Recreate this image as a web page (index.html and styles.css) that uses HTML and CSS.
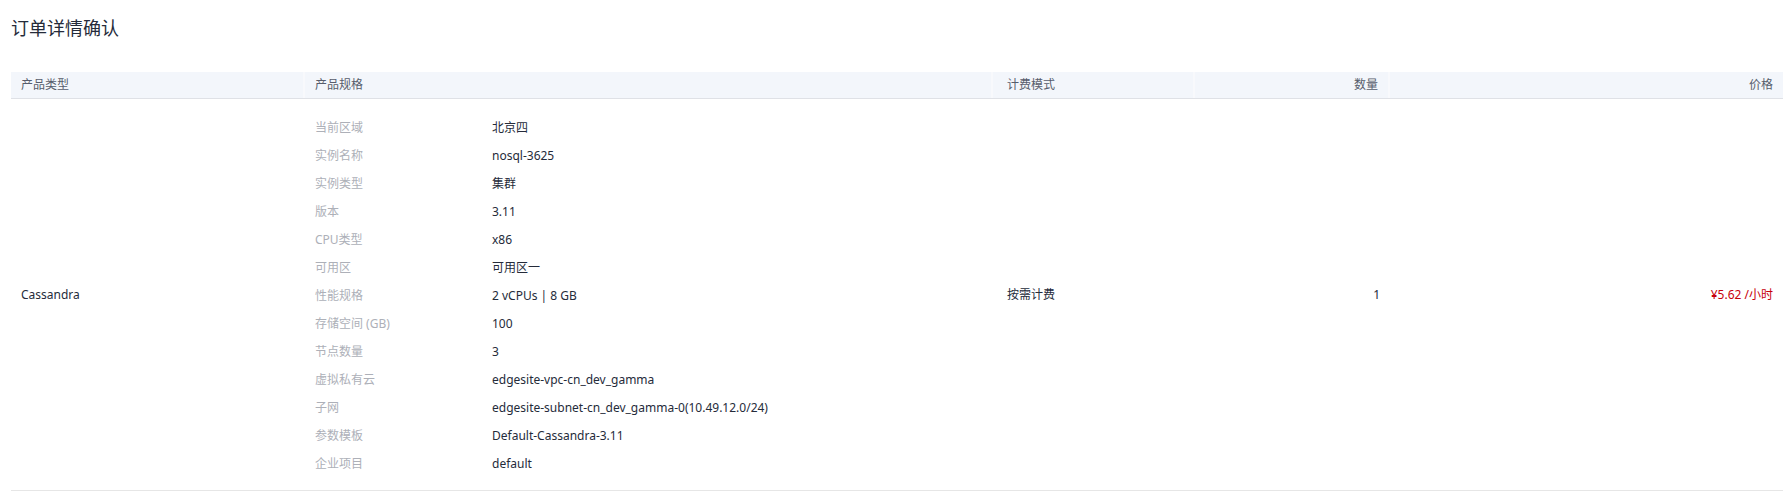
FILE: index.html
```html
<!DOCTYPE html>
<html lang="zh-CN">
<head>
<meta charset="utf-8">
<title>订单详情确认</title>
<link rel="stylesheet" href="styles.css">
</head>
<body>
<div class="page">
  <h1 class="title">订单详情确认</h1>
  <div class="table">
    <div class="thead">
      <div class="th">产品类型</div>
      <div class="th">产品规格</div>
      <div class="th">计费模式</div>
      <div class="th right">数量</div>
      <div class="th right last">价格</div>
    </div>
    <div class="tbody">
      <div class="td">Cassandra</div>
      <div class="td spec-cell">
        <dl class="spec">
          <dt>当前区域</dt><dd>北京四</dd>
          <dt>实例名称</dt><dd>nosql-3625</dd>
          <dt>实例类型</dt><dd>集群</dd>
          <dt>版本</dt><dd>3.11</dd>
          <dt>CPU类型</dt><dd>x86</dd>
          <dt>可用区</dt><dd>可用区一</dd>
          <dt>性能规格</dt><dd>2 vCPUs | 8 GB</dd>
          <dt>存储空间 (GB)</dt><dd>100</dd>
          <dt>节点数量</dt><dd>3</dd>
          <dt>虚拟私有云</dt><dd>edgesite-vpc-cn_dev_gamma</dd>
          <dt>子网</dt><dd>edgesite-subnet-cn_dev_gamma-0(10.49.12.0/24)</dd>
          <dt>参数模板</dt><dd>Default-Cassandra-3.11</dd>
          <dt>企业项目</dt><dd>default</dd>
        </dl>
      </div>
      <div class="td">按需计费</div>
      <div class="td right">1</div>
      <div class="td right price">¥5.62 /小时</div>
    </div>
  </div>
</div>
</body>
</html>
```

FILE: styles.css
```css
html, body {
  margin: 0;
  padding: 0;
  background: #ffffff;
}

body {
  font-family: "Noto Sans", "Noto Sans CJK SC", sans-serif;
  font-size: 12px;
  color: #252b3a;
}

.page {
  padding: 16px 9px 0 11px;
}

.title {
  margin: 0 0 31px 0;
  font-size: 18px;
  font-weight: 400;
  line-height: 25px;
  color: #252b3a;
}

.table {
  display: flex;
  flex-direction: column;
}

.thead,
.tbody {
  display: grid;
  grid-template-columns: 294px 688px 202px 195px 1fr;
}

.thead {
  background: #f3f6fb;
  border-bottom: 1px solid #dfe1e6;
}

.th {
  height: 26px;
  line-height: 26px;
  padding: 0 10px;
  color: #575d6c;
  border-right: 2px solid #f8f9fc;
}

.th.last {
  border-right: none;
}

.tbody {
  border-bottom: 1px solid #e6e6e6;
  align-items: center;
}

.td {
  padding: 0 10px;
  line-height: 20px;
}

.right {
  text-align: right;
}

.th:nth-child(3),
.tbody .td:nth-child(3) {
  padding-left: 14px;
}

.spec-cell {
  padding-top: 15px;
  padding-bottom: 12px;
}

.spec {
  display: grid;
  grid-template-columns: 177px 1fr;
  margin: 0;
  line-height: 28px;
}

.spec dt {
  color: #adb0b8;
}

.spec dd {
  margin: 0;
  color: #252b3a;
}

.price {
  color: #c7000b;
}
```
